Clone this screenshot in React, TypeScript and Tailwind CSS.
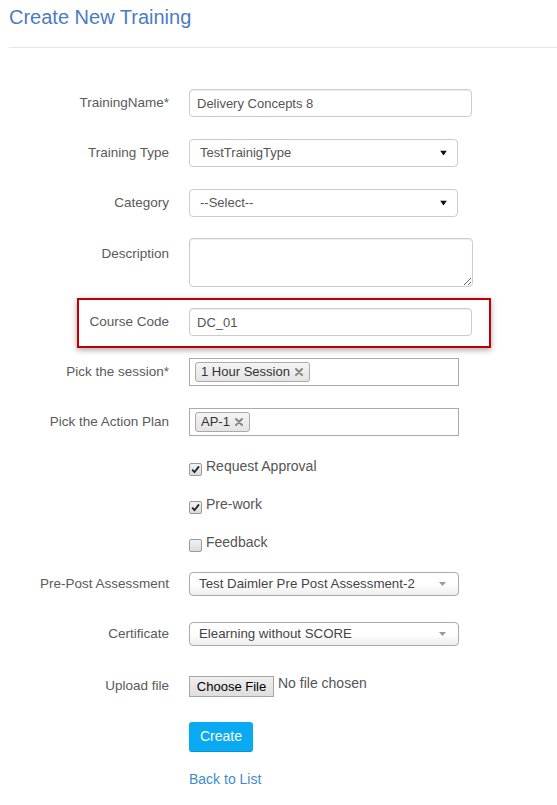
import React from 'react';

const font = { fontFamily: '"Liberation Sans", Arial, Helvetica, sans-serif' };

// label column is 169px wide, controls start at x=189
const Label = ({ children, top = false }: { children: React.ReactNode; top?: boolean }) => (
  <div
    className={`w-[169px] shrink-0 text-right text-[13.5px] text-[#5a5a5a] ${top ? 'self-start pt-[6px]' : ''}`}
  >
    {children}
  </div>
);

const Caret = () => (
  <svg width="7" height="5" viewBox="0 0 7 5" className="absolute right-[10px] top-1/2 -translate-y-1/2">
    <path d="M0 0h7L3.5 5z" fill="#111" />
  </svg>
);

const SoftCaret = () => (
  <svg width="7" height="4" viewBox="0 0 7 4" className="absolute right-[12px] top-1/2 -translate-y-1/2">
    <path d="M0 0h7L3.5 4z" fill="#999" />
  </svg>
);

const Tag = ({ text }: { text: string }) => (
  <span className="flex h-[20px] items-center gap-[5px] rounded-[3px] border border-[#aaa] bg-gradient-to-b from-[#f4f4f4] to-[#e4e4e4] pl-[5px] pr-[6px] text-[13px] text-[#333]">
    {text}
    <svg width="8" height="8" viewBox="0 0 8 8">
      <path d="M1 1l6 6M7 1L1 7" stroke="#888" strokeWidth="2" strokeLinecap="round" />
    </svg>
  </span>
);

const Check = ({ checked }: { checked?: boolean }) => (
  <span className="flex h-[13px] w-[13px] shrink-0 items-center justify-center rounded-[2px] border border-[#9a9a9a] bg-gradient-to-b from-[#f2f2f2] to-[#dcdcdc]">
    {checked && (
      <svg width="9" height="9" viewBox="0 0 9 9">
        <path d="M1.2 4.6l2.3 2.6L8 1.4" fill="none" stroke="#222" strokeWidth="1.8" />
      </svg>
    )}
  </span>
);

const inputCls =
  'h-[28px] w-[283px] rounded-[4px] border border-[#ccc] px-[7px] text-[13px] text-[#555] shadow-[inset_0_1px_1px_rgba(0,0,0,0.075)] outline-none';

export default function App() {
  return (
    <div className="min-h-[805px] w-[557px] bg-white" style={font}>
      <div className="pl-[9px]">
        <h1 className="pt-[6px] text-[20px] leading-[22px] text-[#4a7cc4]">Create New Training</h1>
        <div className="mt-[19px] border-t border-[#e5e5e5]" />
      </div>

      <form className="flex flex-col" onSubmit={(e) => e.preventDefault()}>
        <div className="mt-[41px] flex items-center gap-[20px]">
          <Label>TrainingName*</Label>
          <input className={inputCls} defaultValue="Delivery Concepts 8" style={font} />
        </div>

        <div className="mt-[22px] flex items-center gap-[20px]">
          <Label>Training Type</Label>
          <div className="relative flex h-[28px] w-[269px] items-center rounded-[4px] border border-[#ccc] pl-[10px] text-[13px] text-[#555]">
            TestTrainigType
            <Caret />
          </div>
        </div>

        <div className="mt-[22px] flex items-center gap-[20px]">
          <Label>Category</Label>
          <div className="relative flex h-[28px] w-[269px] items-center rounded-[4px] border border-[#ccc] pl-[10px] text-[13px] text-[#555]">
            --Select--
            <Caret />
          </div>
        </div>

        <div className="mt-[21px] flex gap-[20px]">
          <Label top>Description</Label>
          <textarea className="h-[49px] w-[284px] rounded-[4px] border border-[#ccc] px-[7px] text-[13px] shadow-[inset_0_1px_1px_rgba(0,0,0,0.075)] outline-none" />
        </div>

        <div className="relative mt-[21px] flex items-center gap-[20px]">
          <div className="pointer-events-none absolute left-[77px] top-[-10px] h-[50px] w-[414px] border-2 border-[#c00000] shadow-[0_2px_6px_rgba(0,0,0,0.35)]" />
          <Label>Course Code</Label>
          <input className={inputCls} defaultValue="DC_01" style={font} />
        </div>

        <div className="mt-[22px] flex items-center gap-[20px]">
          <Label>Pick the session*</Label>
          <div className="flex h-[28px] w-[270px] items-center border border-[#aaa] pl-[5px]">
            <Tag text="1 Hour Session" />
          </div>
        </div>

        <div className="mt-[22px] flex items-center gap-[20px]">
          <Label>Pick the Action Plan</Label>
          <div className="flex h-[28px] w-[270px] items-center border border-[#aaa] pl-[5px]">
            <Tag text="AP-1" />
          </div>
        </div>

        <div className="ml-[189px] mt-[21px] flex flex-col gap-[18px] text-[14px] text-[#555]">
          <label className="flex h-[20px] items-center gap-[4px]">
            <span className="pt-[5px]"><Check checked /></span>
            <span className="pb-[2px]">Request Approval</span>
          </label>
          <label className="flex h-[20px] items-center gap-[4px]">
            <span className="pt-[5px]"><Check checked /></span>
            <span className="pb-[2px]">Pre-work</span>
          </label>
          <label className="flex h-[20px] items-center gap-[4px]">
            <span className="pt-[5px]"><Check /></span>
            <span className="pb-[2px]">Feedback</span>
          </label>
        </div>

        <div className="mt-[19px] flex items-center gap-[20px]">
          <Label>Pre-Post Assessment</Label>
          <div className="relative flex h-[24px] w-[270px] items-center rounded-[4px] border border-[#aaa] bg-gradient-to-b from-white from-50% to-[#eee] pl-[9px] text-[13.3px] text-[#444]">
            Test Daimler Pre Post Assessment-2
            <SoftCaret />
          </div>
        </div>

        <div className="mt-[26px] flex items-center gap-[20px]">
          <Label>Certificate</Label>
          <div className="relative flex h-[24px] w-[270px] items-center rounded-[4px] border border-[#aaa] bg-gradient-to-b from-white from-50% to-[#eee] pl-[9px] text-[13.3px] text-[#444]">
            Elearning without SCORE
            <SoftCaret />
          </div>
        </div>

        <div className="mt-[30px] flex items-center gap-[20px]">
          <Label>Upload file</Label>
          <div className="flex items-start gap-[4px]">
            <button
              type="button"
              className="h-[21px] w-[85px] border border-[#a6a6a6] bg-gradient-to-b from-[#efefef] to-[#dedede] text-[13px] text-black"
              style={font}
            >
              Choose File
            </button>
            <span className="mt-[-3px] text-[14px] text-[#555]">No file chosen</span>
          </div>
        </div>

        <div className="ml-[189px] mt-[25px]">
          <button
            type="submit"
            className="h-[30px] w-[64px] rounded-[3px] border-b border-[#0593d3] bg-[#0aaaf2] text-[14px] text-white"
            style={font}
          >
            Create
          </button>
        </div>

        <div className="ml-[189px] mt-[17px] text-[14px] leading-[20px]">
          <a href="#" className="text-[#428bca]">Back to List</a>
        </div>
      </form>
    </div>
  );
}
